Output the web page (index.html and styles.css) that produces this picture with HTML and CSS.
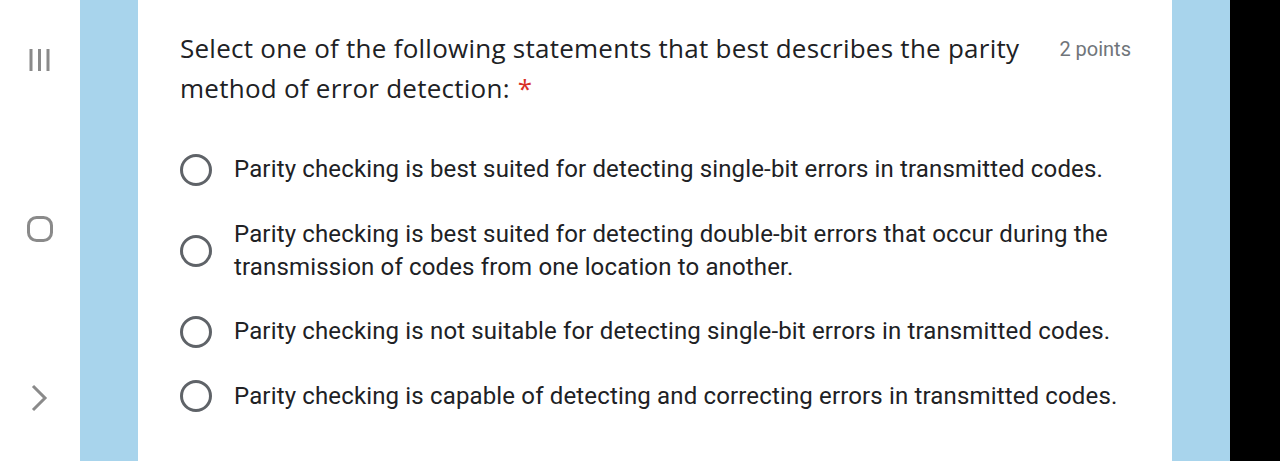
FILE: index.html
```html
<!DOCTYPE html>
<html>
<head>
<meta charset="utf-8">
<link rel="stylesheet" href="styles.css">
</head>
<body>
<div class="screen">
  <nav class="navbar">
    <svg class="nav-icon" width="26" height="26" viewBox="0 0 26 26"><path d="M4 2v22M12.5 2v22M21 2v22" stroke="#8a8a8a" stroke-width="3" fill="none"/></svg>
    <svg class="nav-icon" width="28" height="28" viewBox="0 0 28 28"><rect x="2.5" y="2.5" width="23" height="23" rx="8" stroke="#8a8a8a" stroke-width="3" fill="none"/></svg>
    <svg class="nav-icon" width="20" height="28" viewBox="0 0 20 28"><path d="M3 2l12 12L3 26" stroke="#8a8a8a" stroke-width="3" fill="none"/></svg>
  </nav>
  <div class="band"></div>
  <main class="card">
    <div class="question">
      <div class="title">Select one of the following statements that best describes the parity method of error detection:<span class="req">*</span></div>
      <div class="points">2 points</div>
    </div>
    <div class="options">
      <label class="option"><span class="radio"></span><span class="opt-text">Parity checking is best suited for detecting single-bit errors in transmitted codes.</span></label>
      <label class="option"><span class="radio"></span><span class="opt-text">Parity checking is best suited for detecting double-bit errors that occur during the transmission of codes from one location to another.</span></label>
      <label class="option"><span class="radio"></span><span class="opt-text">Parity checking is not suitable for detecting single-bit errors in transmitted codes.</span></label>
      <label class="option"><span class="radio"></span><span class="opt-text">Parity checking is capable of detecting and correcting errors in transmitted codes.</span></label>
    </div>
  </main>
  <div class="band"></div>
  <div class="edge"></div>
</div>
</body>
</html>
```
FILE: styles.css
```css
html, body {
  margin: 0;
  padding: 0;
  background: #fff;
}
.screen {
  display: flex;
  width: 1280px;
  height: 461px;
  overflow: hidden;
}
.navbar {
  width: 80px;
  flex: none;
  background: #fff;
  display: flex;
  flex-direction: column;
  align-items: center;
  padding-top: 47px;
  box-sizing: border-box;
}
.nav-icon:nth-child(1) { margin-left: -1px; }
.nav-icon:nth-child(2) { margin-top: 142px; }
.nav-icon:nth-child(3) { margin-top: 141px; }
.band {
  width: 58px;
  flex: none;
  background: #a8d4ec;
}
.edge {
  width: 50px;
  flex: none;
  background: #000;
}
.card {
  width: 1034px;
  flex: none;
  background: #fff;
  box-sizing: border-box;
  padding: 28px 41px 0 42px;
}
.question {
  display: flex;
  align-items: flex-start;
  justify-content: space-between;
}
.title {
  width: 860px;
  font-family: "Open Sans", sans-serif;
  font-size: 26px;
  letter-spacing: 0.25px;
  line-height: 40px;
  color: #202124;
}
.req {
  display: inline-block;
  margin-left: 8px;
  color: #d93025;
}
.points {
  font-family: Roboto, sans-serif;
  font-size: 20px;
  color: #70757a;
  line-height: 42px;
}
.options {
  margin-top: 45px;
  display: flex;
  flex-direction: column;
  gap: 31.5px;
}
.option {
  display: flex;
  align-items: center;
  gap: 22px;
  width: 960px;
}
.radio {
  flex: none;
  width: 32px;
  height: 32px;
  box-sizing: border-box;
  border: 3px solid #5f6368;
  border-radius: 50%;
}
.opt-text {
  font-family: Roboto, sans-serif;
  font-size: 24px;
  letter-spacing: 0.15px;
  line-height: 33px;
  color: #202124;
}
```
